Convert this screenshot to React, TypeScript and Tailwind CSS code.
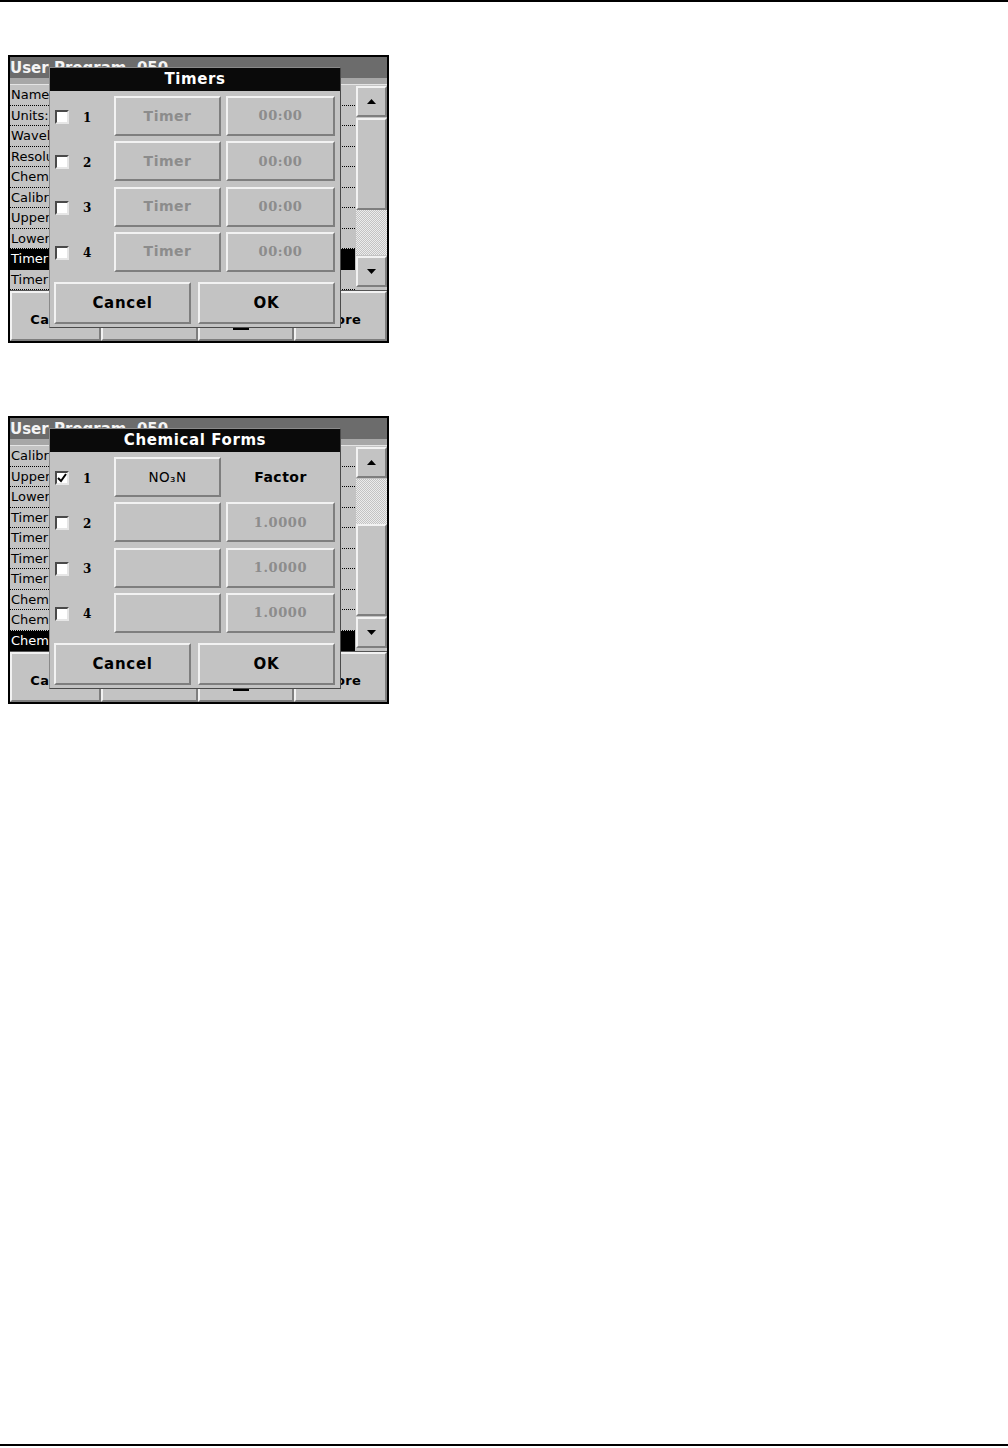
import React from 'react';

const bevel =
    'border-2 border-t-[#f2f2f2] border-l-[#f2f2f2] border-b-[#7e7e7e] border-r-[#7e7e7e]';

type Row = { label: string; selected?: boolean };

type DialogRow = {
    checked?: boolean;
    first: string;
    firstEnabled?: boolean;
    second: string;
    secondIsLabel?: boolean;
};

export default function App() {
    const timerRows: Row[] = [
        { label: 'Name:' },
        { label: 'Units:' },
        { label: 'Wavelength:' },
        { label: 'Resolution:' },
        { label: 'Chemical Form:' },
        { label: 'Calibration:' },
        { label: 'Upper Limit:' },
        { label: 'Lower Limit:' },
        { label: 'Timer 1:', selected: true },
        { label: 'Timer 2:' },
    ];

    const chemRows: Row[] = [
        { label: 'Calibration:' },
        { label: 'Upper Limit:' },
        { label: 'Lower Limit:' },
        { label: 'Timer 1:' },
        { label: 'Timer 2:' },
        { label: 'Timer 3:' },
        { label: 'Timer 4:' },
        { label: 'Chem. Form 1:' },
        { label: 'Chem. Form 2:' },
        { label: 'Chem. Form 3:', selected: true },
    ];

    const timerDialog: DialogRow[] = [1, 2, 3, 4].map(() => ({
        first: 'Timer',
        second: '00:00',
    }));

    const chemDialog: DialogRow[] = [
        { checked: true, first: 'NO₃N', firstEnabled: true, second: 'Factor', secondIsLabel: true },
        { first: '', second: '1.0000' },
        { first: '', second: '1.0000' },
        { first: '', second: '1.0000' },
    ];

    return (
        <div className="w-[1008px] h-[1448px] bg-white flex flex-col font-['DejaVu_Sans',sans-serif]">
            <div className="h-[2px] bg-black" />
            <div className="pl-[8px] pt-[53px]">
                <Screen rows={timerRows} thumbFirst title="Timers" dialogRows={timerDialog} />
            </div>
            <div className="pl-[8px] pt-[73px]">
                <Screen rows={chemRows} thumbFirst={false} title="Chemical Forms" dialogRows={chemDialog} />
            </div>
            <div className="flex-1" />
            <div className="h-[2px] bg-black mb-[2px]" />
        </div>
    );
}

function Screen({
    rows,
    thumbFirst,
    title,
    dialogRows,
}: {
    rows: Row[];
    thumbFirst: boolean;
    title: string;
    dialogRows: DialogRow[];
}) {
    return (
        <div className="relative w-[381px] h-[288px] border-2 border-black bg-[#c3c3c3] flex flex-col overflow-hidden">
            {/* header */}
            <div className="h-[21px] bg-[#6c6c6c] text-[#f4f4f4] font-bold text-[15px] leading-[23px] whitespace-pre">
                User Program  050
            </div>
            <div className="h-[7px] bg-[#a7a7a7] border-b border-[#e4e4e4]" />

            {/* list + scrollbar */}
            <div className="flex h-[205px] gap-[1px]">
                <div className="w-[345px] flex flex-col">
                    {rows.map((r, i) => (
                        <div
                            key={i}
                            className={
                                'h-[20.5px] text-[13px] leading-[20px] pl-[1px] border-b border-dotted border-black whitespace-nowrap ' +
                                (r.selected ? 'bg-black text-white' : 'text-black')
                            }
                        >
                            {r.label}
                        </div>
                    ))}
                </div>
                <div className="w-[31px] flex flex-col pt-[1px] gap-[1px]">
                    <div className={`h-[31px] ${bevel} flex items-center justify-center`}>
                        <svg width="9" height="5" viewBox="0 0 9 5">
                            <polygon points="4.5,0 9,5 0,5" fill="#000" />
                        </svg>
                    </div>
                    <div className="h-[137px] flex flex-col">
                        {thumbFirst ? (
                            <>
                                <div className={`h-[92px] ${bevel}`} />
                                <Stipple />
                            </>
                        ) : (
                            <>
                                <Stipple />
                                <div className={`h-[92px] ${bevel}`} />
                            </>
                        )}
                    </div>
                    <div className={`h-[31px] ${bevel} flex items-center justify-center`}>
                        <svg width="9" height="5" viewBox="0 0 9 5">
                            <polygon points="0,0 9,0 4.5,5" fill="#000" />
                        </svg>
                    </div>
                </div>
            </div>

            {/* bottom buttons */}
            <div className="flex-1 flex border-t border-[#555]">
                <div className={`w-[91px] ${bevel} flex justify-center pt-[17px] text-[13px] font-bold tracking-[0.3px]`}>Cancel</div>
                <div className={`w-[97px] ${bevel}`} />
                <div className={`w-[96px] ${bevel} flex flex-col items-center justify-end pb-[9px] pr-[10px]`}>
                    <div className="w-[16px] h-[3px] bg-black" />
                </div>
                <div className={`flex-1 ${bevel} flex justify-center pt-[17px] text-[13px] font-bold tracking-[0.3px]`}>Store</div>
            </div>

            {/* dialog */}
            <div className="absolute left-[39px] top-[10px] w-[292px] h-[261px] bg-[#c3c3c3] border border-[#8a8a8a] border-r-[#4a4a4a] border-b-[#4a4a4a] flex flex-col">
                <div className="h-[23px] bg-[#0a0a0a] text-white text-[15px] font-bold tracking-[0.6px] leading-[23px] text-center">
                    {title}
                </div>
                <div className="flex flex-col gap-[5.33px] pt-[5px]">
                    {dialogRows.map((d, i) => (
                        <div key={i} className="flex items-center h-[40px]">
                            <div className="ml-[5px] mt-[2px] w-[14px] h-[14px] bg-white border-2 border-t-[#4a4a4a] border-l-[#4a4a4a] border-b-[#e6e6e6] border-r-[#e6e6e6] flex items-center justify-center">
                                {d.checked && (
                                    <svg width="10" height="10" viewBox="0 0 10 10">
                                        <path d="M1 5 L4 8 L9 1" stroke="#000" strokeWidth="2" fill="none" />
                                    </svg>
                                )}
                            </div>
                            <div className="w-[45px] pl-[14px] pt-[3px] font-['DejaVu_Serif',serif] font-bold text-[12px] text-black">
                                {i + 1}
                            </div>
                            <div
                                className={`w-[107px] h-[40px] ${bevel} flex items-center justify-center tracking-[0.5px] ${
                                    d.firstEnabled ? 'text-black text-[13.5px]' : 'text-[#8c8c8c] font-bold text-[14px]'
                                }`}
                            >
                                {d.first}
                            </div>
                            {d.secondIsLabel ? (
                                <div className="ml-[5px] w-[109px] h-[40px] flex items-center justify-center text-[14px] tracking-[0.5px] font-bold text-black">
                                    {d.second}
                                </div>
                            ) : (
                                <div
                                    className={`ml-[5px] w-[109px] h-[40px] ${bevel} flex items-center justify-center font-['DejaVu_Serif',serif] font-bold text-[13px] tracking-[0.6px] text-[#8c8c8c]`}
                                >
                                    {d.second}
                                </div>
                            )}
                        </div>
                    ))}
                </div>
                <div className="flex gap-[7px] ml-[4px] mt-[10px]">
                    <div className={`w-[137px] h-[42px] ${bevel} flex items-center justify-center text-[15px] tracking-[0.7px] font-bold`}>
                        Cancel
                    </div>
                    <div className={`w-[137px] h-[42px] ${bevel} flex items-center justify-center text-[15px] tracking-[0.7px] font-bold`}>
                        OK
                    </div>
                </div>
            </div>
        </div>
    );
}

function Stipple() {
    return (
        <div className="flex-1 bg-[image:repeating-conic-gradient(#c3c3c3_0%_25%,#ececec_0%_50%)] bg-[length:2px_2px]" />
    );
}
